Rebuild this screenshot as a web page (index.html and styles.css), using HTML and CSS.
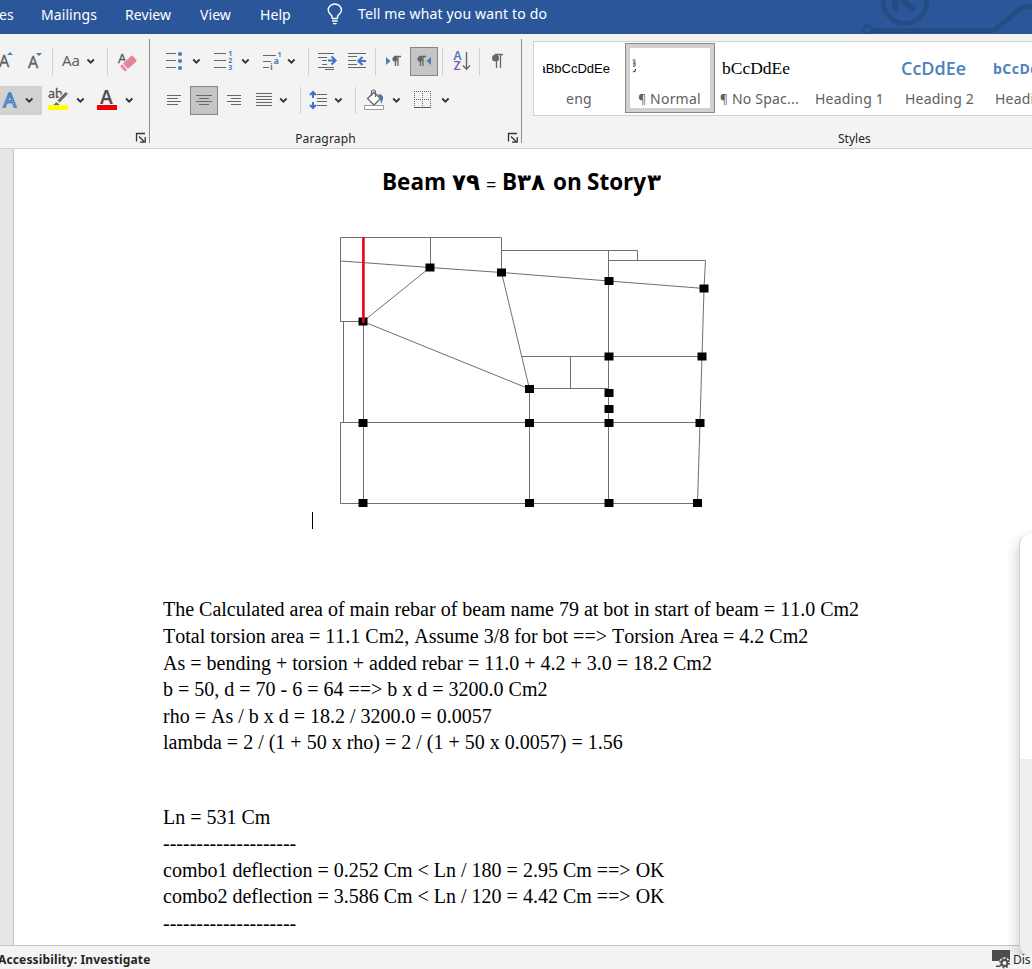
FILE: index.html
```html
<!DOCTYPE html>
<html lang="en">
<head>
<meta charset="utf-8">
<title>Document</title>
<link rel="stylesheet" href="styles.css">
</head>
<body>
<div class="app">
  <nav class="tabs">
    <span class="tab tab-cut">es</span>
    <span class="tab tab-mailings">Mailings</span>
    <span class="tab tab-review">Review</span>
    <span class="tab tab-view">View</span>
    <span class="tab tab-help">Help</span>
    <svg class="bulb" width="16" height="22" viewBox="0 0 16 22" fill="none" stroke="#fff" stroke-width="1.4"><path d="M5 15.5V13C3.500 11.500 1.200 9.800 1.200 7.300a6.600 6.300 0 0 1 13.200 0C14.400 9.800 12 11.500 10.600 13v2.500M5 15.500h5.600M5 18h5.600M6 20.600h3.600"/></svg>
    <span class="tell">Tell me what you want to do</span>
    <svg class="circuit" width="172" height="34" viewBox="860 0 172 34" fill="none" stroke="#264c85"><circle cx="905" cy="2" r="21.500" stroke-width="5"/><path d="M895 0V11M901 -2L914 11" stroke-width="6.500"/><circle cx="867.500" cy="30" r="4.200" stroke-width="3"/><path d="M872 30.500H994L1022 7.500Q1024 6.500 1034 6.500" stroke-width="5"/></svg>
  </nav>

  <section class="ribbon">
    <div class="group group-font">
      <div class="tools">
        <svg width="52" height="29" viewBox="0 47 52 29"><text class="ico-a" x="-1" y="67">A</text><path fill="#4a7fb5" d="M7 55h6l-3-3zM36 53h6l-3 3z"/><text class="ico-a" x="28" y="68">A</text></svg>
        <svg width="55" height="29" viewBox="52 47 55 29"><path class="sep" d="M52.500 48v27"/><text class="ico-aa" x="62" y="66">Aa</text><path class="chev" d="M87.500 59.500l3.200 3.200 3.200-3.200"/></svg>
        <svg width="42" height="29" viewBox="107 47 42 29"><path class="sep" d="M107.500 48v27"/><text class="ico-er" x="118" y="63">A</text><g transform="rotate(-42 128.500 63.500)" fill="#e8849a" stroke="#f3f3f3" stroke-width=".6"><rect x="124" y="59.500" width="13" height="8" rx="1.500"/><rect x="120.200" y="59.500" width="3.200" height="8" rx="1"/></g></svg>
      </div>
      <div class="tools">
        <svg width="42" height="29" viewBox="0 86 42 29"><path fill="#d2d2d2" d="M0 86h42v29H0z"/><text class="ico-glow" x="3.200" y="107">A</text><path class="chev" d="M26 98.500l3.200 3.200 3.200-3.200"/></svg>
        <svg width="48" height="29" viewBox="42 86 48 29"><text class="ico-ab" x="48" y="98">ab</text><path stroke="#f3f3f3" stroke-width="5" d="M57 103L67 92.500"/><path stroke="#6a6a6a" stroke-width="3.200" d="M58.500 101.500L66.800 93"/><path fill="#6a6a6a" d="M53 105q2-.5 3-3l3.500 2.500q-1.500 1.500-6.500.5z"/><path fill="#ff0" d="M48 105h20v5H48z"/><path class="chev" d="M77.200 98.500l3.200 3.200 3.200-3.200"/></svg>
        <svg width="59" height="29" viewBox="90 86 59 29"><text class="ico-color" x="100" y="104">A</text><path fill="#e00" d="M97 105h20v5H97z"/><path class="chev" d="M126 98.500l3.200 3.200 3.200-3.200"/></svg>
      </div>
      <div class="caption">
        <svg class="launch" width="12" height="12" viewBox="0 0 12 12"><path d="M1.500 9.500V1.500H10M4 4.500L9 9.500M10.200 5v5.200H5"/></svg>
      </div>
    </div>

    <div class="group group-par">
      <div class="tools">
        <svg width="55" height="29" viewBox="150 47 55 29"><path class="ln" d="M166 53.500h10M166 60.500h10M166 67.500h10"/><g fill="#4a7fb5"><circle cx="180" cy="54" r="2.100"/><circle cx="180" cy="61" r="2.100"/><circle cx="180" cy="68" r="2.100"/></g><path class="chev" d="M193.200 59.500l3.200 3.200 3.200-3.200"/></svg>
        <svg width="49" height="29" viewBox="205 47 49 29"><path class="ln" d="M214 53.500h12M214 60.500h12M214 67.500h12"/><text class="num" x="228.300" y="56">1</text><text class="num" x="228.300" y="63">2</text><text class="num" x="228.300" y="70">3</text><path class="chev" d="M242.200 59.500l3.200 3.200 3.200-3.200"/></svg>
        <svg width="54" height="29" viewBox="254 47 54 29"><path class="ln" d="M263 55.500h13M263 61.500h8M263 67.500h6"/><text class="num" x="277.500" y="57">1</text><text class="num num-a" x="273.500" y="64">a</text><text class="num num-a" x="270" y="70">i</text><path class="chev" d="M288.200 59.500l3.200 3.200 3.200-3.200"/></svg>
        <svg width="67" height="29" viewBox="308 47 67 29"><path class="sep" d="M308.500 48v27"/><path class="ln" d="M318 53.500h16M318 57.500h9M322 60.500h5M322 64.500h5M318 67.500h16M325 69.500h9M348 53.500h18M348 56.500h9M348 60.500h8M348 64.500h9M348 67.500h18"/><path fill="none" stroke="#4472c4" stroke-width="2.200" d="M328 60.500h7M331.500 56.500l4 4-4 4M366 61h-7M362.500 57l-4 4 4 4"/></svg>
        <svg width="35" height="29" viewBox="375 47 35 29"><path class="sep" d="M375.500 48v27"/><path fill="#4a7fb5" d="M386 57v8l4.500-4z"/><path class="pil" d="M398 66V56.500M395.500 66V56.500M394 56.500H401"/><circle cx="395" cy="59" r="2.600" fill="#666"/></svg>
        <svg class="pressed" width="28" height="29" viewBox="410 47 28 29"><path fill="#4a7fb5" d="M431 57v8l-4.500-4z"/><path class="pil" d="M423 66V56.500M420.500 66V56.500M419 56.500H426"/><circle cx="420" cy="59" r="2.600" fill="#666"/></svg>
        <svg width="41" height="29" viewBox="438 47 41 29"><path class="sep" d="M442.500 48v27"/><text class="sort" x="453.500" y="60" fill="#4a7fb5">A</text><text class="sort" x="453.700" y="70" fill="#8b58ae">Z</text><path fill="none" stroke="#666" stroke-width="1.400" d="M466.500 52v17M463 65.500l3.500 3.700 3.500-3.700"/></svg>
        <svg width="43" height="29" viewBox="479 47 43 29"><path class="sep" d="M479.500 48v27"/><path class="pil" d="M500.500 68V54.500M496.500 68V54.500M495 54.500h8"/><circle cx="495.500" cy="58" r="3.500" fill="#666"/></svg>
      </div>
      <div class="tools">
        <svg width="40" height="29" viewBox="150 86 40 29"><path class="ln" d="M167 95.500h14M167 98.500h11M167 101.500h14M167 104.500h11"/></svg>
        <svg class="pressed" width="28" height="29" viewBox="190 86 28 29"><path class="ln" d="M196 95.500h16M199 98.500h10M196 101.500h16M199 104.500h10"/></svg>
        <svg width="82" height="29" viewBox="218 86 82 29"><path class="ln" d="M227 95.500h14M231 98.500h10M227 101.500h14M231 104.500h10M256 93.500h16M256 96.500h16M256 99.500h16M256 102.500h16M256 105.500h16"/><path class="chev" d="M280.200 98.500l3.200 3.200 3.200-3.200"/></svg>
        <svg width="55" height="29" viewBox="300 86 55 29"><path class="sep" d="M300.500 87v27"/><path class="ln" d="M317 94.500h10M317 98.500h10M317 101.500h10M317 105.500h10"/><path fill="none" stroke="#4472c4" stroke-width="2" d="M313 92v6M310 95l3-3 3 3M313 102v6M310 105l3 3 3-3"/><path class="chev" d="M335.200 98.500l3.200 3.200 3.200-3.200"/></svg>
        <svg width="48" height="29" viewBox="355 86 48 29"><path class="sep" d="M355.500 87v27"/><path fill="#fff" stroke="#666" stroke-width="1.300" d="M367.500 98.500l6.500-6 6.500 6-6.500 6.500z"/><path fill="none" stroke="#666" stroke-width="1.200" d="M371.500 96v-4q0-2 2-2t2 2v5"/><path fill="#3f78b4" d="M378 94q4 0 5 3 .5 3-2 7-.5-4-1-6z"/><path fill="#fff" stroke="#999" d="M364.500 105.500h19v4h-19z"/><path class="chev" d="M393.200 98.500l3.200 3.200 3.200-3.200"/></svg>
        <svg width="60" height="29" viewBox="403 86 60 29"><g stroke="#666" stroke-dasharray="1 1"><path d="M414 91.500h17M414 99.500h17M414.500 91v16M422.500 91v16M430.500 91v16"/></g><path stroke="#555" d="M414 107.500h17"/><path class="chev" d="M442.200 98.500l3.200 3.200 3.200-3.200"/></svg>
      </div>
      <div class="caption">
        <span class="cap-par">Paragraph</span>
        <svg class="launch" width="12" height="12" viewBox="0 0 12 12"><path d="M1.500 9.500V1.500H10M4 4.500L9 9.500M10.200 5v5.200H5"/></svg>
      </div>
    </div>

    <div class="group-styles">
      <div class="gallery">
        <div class="style"><span class="pv pv-eng"><bdi>aBbCcDdEe</bdi></span><span class="nm">eng</span></div>
        <div class="style style-on"><span class="pv pv-normal"><svg width="6" height="14" viewBox="0 0 6 14" fill="none" stroke="#222"><path d="M.5 1h3M1 3h2.500L1 5h3" stroke="#357"/><path d="M1 7.500l2.500-1M3.500 10q.5 3-2.500 3"/></svg></span><span class="nm"><i class="pm">¶</i> Normal</span></div>
        <div class="style"><span class="pv pv-nospace">bCcDdEe</span><span class="nm"><i class="pm">¶</i> No Spac...</span></div>
        <div class="style"><span class="pv"></span><span class="nm">Heading 1</span></div>
        <div class="style"><span class="pv pv-h2">CcDdEe</span><span class="nm">Heading 2</span></div>
        <div class="style"><span class="pv pv-h3">bCcDdEe</span><span class="nm">Heading 3</span></div>
      </div>
      <div class="cap-styles">Styles</div>
    </div>
  </section>

  <main class="work">
    <article class="page">
      <h1 class="title"><span class="w-beam">Beam</span><span class="w-79 fa">۷۹</span><span class="w-eq">=</span><span class="w-b">B</span><span class="w-38 fa">۳۸</span><span class="w-on">on</span><span class="w-story">Story</span><span class="fa">۳</span></h1>
      <svg class="plan" width="390" height="280" viewBox="330 230 390 280">
        <g fill="none" stroke="#707070">
          <path d="M340.500 321.500V237.500H501.500V272.500M430.500 237.500V267.500M341 261L430 267.500L501.500 272.500L609 281L704.500 288.500M340.500 321.500H363M343.500 321.500V423M363.500 321.500V503M340.500 503.500V422.500H700M340.500 503.500H697.500M430 267.500L363 321.500L529.500 389M501.500 272.500L529.500 389V503M501.500 250.500H637.500V260.500M608.500 250.500V503M609 260.500H705.500L704 288.500L702 356.500L700 423L697.500 503M521.500 356.500H702M570.500 356.500V388.500M529.500 388.500H609"/>
        </g>
        <path fill="#000" d="M425.500 263.500h9v8h-9zM497 268.500h9v8h-9zM604.500 277h9v8h-9zM699.500 284.500h9v8h-9zM358.500 317.500h9v8h-9zM604.500 352.500h9v8h-9zM697.500 352.500h9v8h-9zM525 385h9v8h-9zM604.500 389h9v8h-9zM604.500 405h9v8h-9zM358.500 419h9v8h-9zM525 419h9v8h-9zM604.500 419h9v8h-9zM695.500 419h9v8h-9zM358.500 499h9v8h-9zM525 499h9v8h-9zM604.500 499h9v8h-9zM693 499h9v8h-9z"/>
        <path stroke="#f0000c" stroke-width="2.600" d="M363.400 237V323"/>
      </svg>
      <div class="caret"></div>
      <div class="calc">
        <p>The Calculated area of main rebar of beam name 79 at bot in start of beam = 11.0 Cm2</p>
        <p>Total torsion area = 11.1 Cm2, Assume 3/8 for bot ==&gt; Torsion Area = 4.2 Cm2</p>
        <p>As = bending + torsion + added rebar = 11.0 + 4.2 + 3.0 = 18.2 Cm2</p>
        <p>b = 50, d = 70 - 6 = 64 ==&gt; b x d = 3200.0 Cm2</p>
        <p>rho = As / b x d = 18.2 / 3200.0 = 0.0057</p>
        <p>lambda = 2 / (1 + 50 x rho) = 2 / (1 + 50 x 0.0057) = 1.56</p>
      </div>
      <div class="calc calc-defl">
        <p>Ln = 531 Cm</p>
        <p>--------------------</p>
        <p>combo1 deflection = 0.252 Cm &lt; Ln / 180 = 2.95 Cm ==&gt; OK</p>
        <p>combo2 deflection = 3.586 Cm &lt; Ln / 120 = 4.42 Cm ==&gt; OK</p>
        <p>--------------------</p>
      </div>
    </article>
  </main>

  <footer class="status">
    <span class="acc">Accessibility: Investigate</span>
    <span class="disp"><svg width="21" height="20" viewBox="0 0 21 20"><path fill="#4d4d4d" d="M1 1h18v11H1zM5 16.500h5v1.500H5z"/><circle cx="13.500" cy="14" r="4.200" fill="#f3f3f3" stroke="#f3f3f3" stroke-width="3"/><circle cx="13.500" cy="14" r="3" fill="none" stroke="#4d4d4d" stroke-width="2"/><circle cx="13.500" cy="14" r="4.600" fill="none" stroke="#4d4d4d" stroke-width="1.600" stroke-dasharray="1.800 1.810"/></svg><span class="dis">Dis</span></span>
  </footer>
  <aside class="popup"></aside>
</div>
</body>
</html>
```
FILE: styles.css
```css
* { box-sizing: border-box; }
body { margin: 0; font-family: "Noto Sans", sans-serif; }
.app { position: relative; width: 1032px; height: 969px; overflow: hidden; display: flex; flex-direction: column; background: #fff; }
svg { display: block; flex: none; }

.tabs { height: 34px; flex: none; display: flex; background: #2b579a; color: #fff; font-size: 14px; line-height: 30px; white-space: nowrap; }
.tab { flex: none; letter-spacing: .08px; }
.tab-cut { width: 41px; text-indent: -1px; }
.tab-mailings { width: 84px; }
.tab-review { width: 75px; }
.tab-view { width: 60px; }
.tab-help { width: 67px; }
.bulb { margin-top: 3px; }
.tell { margin-left: 15px; width: 502px; line-height: 28px; letter-spacing: .16px; }

.ribbon { height: 115px; flex: none; display: flex; background: #f3f3f3; border-bottom: 1px solid #d0d0d0; }
.group { height: 104px; margin-top: 5px; border-right: 1px solid #8f8f8f; display: flex; flex-direction: column; padding-top: 8px; gap: 10px; }
.group-font { width: 150px; }
.group-par { width: 372px; }
.tools { display: flex; height: 29px; flex: none; }
.caption { display: flex; justify-content: flex-end; padding: 6px 2px 0 0; height: 18px; }
.cap-par { font-size: 12px; line-height: 14px; margin-right: 151px; margin-top: 1px; color: #262626; letter-spacing: .2px; }
.launch { fill: none; stroke: #333; stroke-width: 1.3; margin-top: 1px; }
.pressed { background: #c5c5c5; outline: 1px solid #858585; outline-offset: -1px; }

.sep { stroke: #d0d0d0; }
.ln { stroke: #666; fill: none; }
.pil { stroke: #666; stroke-width: 1.3; fill: none; }
.chev { stroke: #333; stroke-width: 1.8; fill: none; }
.ico-a { font-size: 16px; fill: #606060; stroke: #606060; stroke-width: .3px; }
.ico-aa { font-size: 15px; fill: #606060; }
.ico-er { font-size: 13px; fill: #555; stroke: #555; stroke-width: .3px; }
.ico-glow { font-size: 20px; fill: #f2f8ff; stroke: #3f7fc5; stroke-width: 1.3px; }
.ico-ab { font-size: 12.5px; fill: #505050; stroke: #505050; stroke-width: .3px; }
.ico-color { font-size: 19px; font-weight: 600; fill: #505050; }
.num { font-size: 7px; font-weight: 700; fill: #4a7fb5; }
.num-a { font-size: 9px; }
.sort { font-size: 12px; font-weight: 600; }

.group-styles { flex: none; width: 510px; padding: 7px 0 0 11px; }
.gallery { height: 75px; width: 560px; display: flex; background: #fff; border: 1px solid #d2d2d2; }
.style { width: 90px; flex: none; overflow: hidden; display: flex; flex-direction: column; align-items: center; padding-top: 13px; white-space: nowrap; }
.style:first-child { width: 91px; }
.style-on { height: 70px; margin-top: 1px; padding-top: 11px; border: 1px solid #8a8a8a; box-shadow: inset 0 0 0 4px #d2d0ce; }
.pv { height: 28px; width: 80px; line-height: 28px; overflow: hidden; display: block; }
.pv-eng { font-family: "Liberation Sans", sans-serif; font-size: 13px; width: 67px; margin-right: 6px; direction: rtl; }
.pv-normal { padding: 4px 0 0 2px; }
.pv-nospace { font-family: "Liberation Serif", serif; font-size: 17.5px; line-height: 26px; width: 76px; }
.pv-h2 { font-family: "Open Sans", sans-serif; font-size: 18px; font-weight: 600; color: #4f81bd; width: 78px; line-height: 26px; }
.pv-h3 { font-family: "Open Sans", sans-serif; font-size: 14px; font-weight: 700; color: #4f81bd; width: 74px; letter-spacing: .5px; }
.nm { font-size: 14px; line-height: 20px; margin-top: 6px; color: #606060; letter-spacing: .2px; margin-left: -1px; }
.pm { font-style: normal; font-size: 12px; }
.cap-styles { font-size: 12px; line-height: 14px; margin: 16px 0 0 305px; color: #262626; }

.work { flex: none; height: 797px; display: flex; padding-left: 13px; background: #e6e6e6; border-bottom: 1px solid #c6c6c6; }
.page { flex: 1; background: #fff; border-left: 1px solid #c6c6c6; overflow: hidden; }
.title { display: flex; height: 36px; margin: 15px 0 30px 368px; font-family: "Open Sans", sans-serif; font-size: 22.5px; font-weight: 700; line-height: 36px; white-space: nowrap; }
.title span { flex: none; }
.title .fa { font-family: "DejaVu Sans", sans-serif; font-size: 23px; letter-spacing: 1px; line-height: 37px; }
.w-beam { width: 70px; }
.w-79 { width: 34px; }
.title .w-eq { width: 16px; font-size: 18px; font-weight: 400; line-height: 40px; }
.w-b { width: 15px; }
.w-38 { width: 36px; }
.w-on { width: 34px; }
.w-story { width: 60px; }
.plan { margin-left: 316px; }
.caret { width: 1px; height: 17px; margin: 2px 0 0 298px; background: #000; }
.calc { margin: 67.4px 0 0 149px; font-family: "Liberation Serif", serif; font-size: 20px; line-height: 26.6px; font-kerning: none; }
.calc p { margin: 0; white-space: nowrap; }
.calc-defl { margin-top: 47.6px; }

.status { height: 23px; display: flex; justify-content: space-between; background: #f3f3f3; font-size: 12px; line-height: 27px; color: #262626; }
.acc { font-weight: 700; margin-left: -2px; white-space: nowrap; letter-spacing: .14px; }
.disp { width: 41px; display: flex; }
.disp svg { margin-top: 3px; }
.dis { margin-left: 1px; }
.popup { position: absolute; left: 1019px; top: 534px; width: 40px; height: 421px; border-radius: 10px; border-left: 1px solid #d0d0d0; background: linear-gradient(#fff 225px, #eee 225px); box-shadow: 0 6px 14px rgba(0, 0, 0, .24); clip-path: inset(-30px 0 0 -30px); }
```
